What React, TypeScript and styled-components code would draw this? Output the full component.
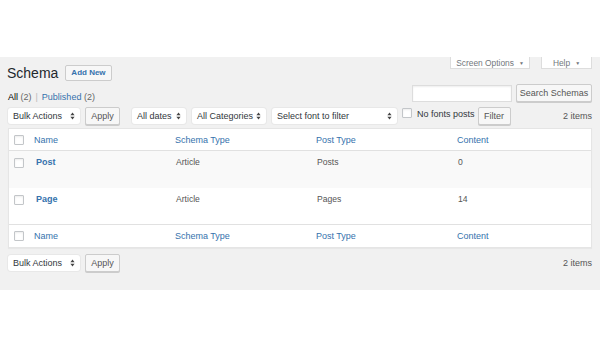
import React from "react";
import styled, { createGlobalStyle } from "styled-components";

const Global = createGlobalStyle`
  html, body { margin: 0; padding: 0; background: #fff; }
  body { font-family: "Liberation Sans", Arial, sans-serif; color: #444; }
  * { box-sizing: border-box; }
`;

const Page = styled.div`
  padding-top: 57px;
`;

const Wrap = styled.div`
  background: #f1f1f1;
  height: 233px;
  padding: 0 8px;
`;

const TopRow = styled.div`
  display: flex;
  justify-content: space-between;
  align-items: flex-start;
`;

const HeadingGroup = styled.div`
  display: flex;
  align-items: center;
  gap: 7px;
  padding-top: 8px;
  height: 24px;
`;

const Title = styled.h1`
  margin: 0 0 0 -1px;
  font-size: 14px;
  font-weight: 400;
  line-height: 16px;
  color: #23282d;
`;

const AddNew = styled.button`
  height: 16px;
  padding: 0 5px;
  font-family: inherit;
  font-size: 8px;
  font-weight: 700;
  color: #3572ad;
  background: #f7f7f7;
  border: 1px solid #ccc;
  border-radius: 2px;
  line-height: 14px;
`;

const Tabs = styled.div`
  display: flex;
  gap: 11px;
`;

const Tab = styled.div<{ $w: number }>`
  width: ${(p) => p.$w}px;
  height: 12px;
  background: #fff;
  border: 1px solid #ddd;
  border-top: none;
  display: flex;
  align-items: center;
  justify-content: center;
  gap: 5px;
  font-size: 8.4px;
  color: #72777c;
`;

const Caret = styled.span`
  font-size: 5px;
  color: #72777c;
`;

const Row2 = styled.div`
  display: flex;
  justify-content: space-between;
  align-items: flex-end;
  margin-top: 3px;
`;

const SubSub = styled.div`
  font-size: 9px;
  line-height: 11px;
  color: #666;
  margin-bottom: -1px;
  b { color: #000; font-weight: 400; }
  a { color: #3572ad; text-decoration: none; }
`;

const Sep = styled.span`
  color: #bbb;
  margin: 0 4px;
`;

const SearchBox = styled.div`
  display: flex;
  align-items: center;
  gap: 4px;
`;

const Input = styled.div`
  width: 100px;
  height: 17px;
  background: #fff;
  border: 1px solid #ddd;
  box-shadow: inset 0 1px 2px rgba(0, 0, 0, 0.07);
`;

const Btn = styled.button<{ $w: number }>`
  width: ${(p) => p.$w}px;
  height: 18px;
  padding: 0;
  font-family: inherit;
  font-size: 9px;
  color: #555;
  background: #f7f7f7;
  border: 1px solid #ccc;
  border-radius: 2px;
  box-shadow: 0 1px 0 #ccc;
  line-height: 16px;
`;

const Toolbar = styled.div<{ $top: number }>`
  display: flex;
  align-items: center;
  margin-top: ${(p) => p.$top}px;
  height: 18px;
`;

const Select = styled.div<{ $w: number; $ml?: number }>`
  width: ${(p) => p.$w}px;
  margin-left: ${(p) => p.$ml ?? 0}px;
  height: 16px;
  background: #fff;
  border-radius: 3px;
  box-shadow: 0 0 0 1px #e8e8e8;
  display: flex;
  align-items: center;
  justify-content: space-between;
  padding: 0 5px;
  font-size: 9px;
  color: #32373c;
  white-space: nowrap;
`;

const Arrows = () => (
  <svg width="5" height="8" viewBox="0 0 5 8">
    <path d="M2.5 0.5 L4.6 3.2 L0.4 3.2 Z" fill="#444" />
    <path d="M2.5 7.5 L4.6 4.8 L0.4 4.8 Z" fill="#444" />
  </svg>
);

const Gap = styled.div<{ $w: number }>`
  width: ${(p) => p.$w}px;
  flex: none;
`;

const Check = styled.span`
  display: inline-block;
  width: 10px;
  height: 10px;
  background: #fff;
  border: 1px solid #c3c6c9;
  border-radius: 1px;
  box-shadow: inset 0 1px 2px rgba(0, 0, 0, 0.08);
  flex: none;
`;

const ToolCheck = styled(Check)`
  align-self: flex-start;
  margin-top: 1px;
`;

const Label = styled.span`
  font-size: 9px;
  color: #32373c;
  margin-left: 5px;
  margin-right: 3px;
  margin-top: -4px;
`;

const Count = styled.span`
  margin-left: auto;
  font-size: 9px;
  color: #555;
`;

const Table = styled.div`
  margin-top: 3px;
  background: #fff;
  border: 1px solid #e5e5e5;
  box-shadow: 0 1px 1px rgba(0, 0, 0, 0.04);
`;

const Row = styled.div<{ $h: number; $alt?: boolean; $head?: boolean; $foot?: boolean }>`
  display: grid;
  grid-template-columns: 25px 141px 141px 141px 1fr;
  height: ${(p) => p.$h}px;
  background: ${(p) => (p.$alt ? "#f9f9f9" : "#fff")};
  border-bottom: ${(p) => (p.$head ? "1px solid #e1e1e1" : "none")};
  border-top: ${(p) => (p.$foot ? "1px solid #e1e1e1" : "none")};
  align-items: ${(p) => (p.$head || p.$foot ? "center" : "start")};
  padding-top: ${(p) => (p.$head || p.$foot ? 0 : 7)}px;
`;

const CheckCell = styled.div`
  display: flex;
  padding-left: 5px;
`;

const HeadCell = styled.div`
  font-size: 9px;
  color: #3572ad;
`;

const TitleCell = styled.div`
  font-size: 9px;
  font-weight: 700;
  color: #3572ad;
  padding-left: 2px;
  margin-top: -1px;
`;

const Cell = styled.div`
  font-size: 8.6px;
  color: #555;
  padding-left: 1px;
  margin-top: -1px;
`;

const columns = ["Name", "Schema Type", "Post Type", "Content"];
const rows = [
  { name: "Post", type: "Article", post: "Posts", content: "0" },
  { name: "Page", type: "Article", post: "Pages", content: "14" },
];

const HeaderRow = ({ foot }: { foot?: boolean }) => (
  <Row $h={foot ? 23 : 22} $head={!foot} $foot={foot}>
    <CheckCell>
      <Check />
    </CheckCell>
    {columns.map((c) => (
      <HeadCell key={c}>{c}</HeadCell>
    ))}
  </Row>
);

export default function App() {
  return (
    <Page>
      <Global />
      <Wrap>
        <TopRow>
          <HeadingGroup>
            <Title>Schema</Title>
            <AddNew>Add New</AddNew>
          </HeadingGroup>
          <Tabs>
            <Tab $w={80}>
              Screen Options <Caret>▼</Caret>
            </Tab>
            <Tab $w={51}>
              Help <Caret>▼</Caret>
            </Tab>
          </Tabs>
        </TopRow>
        <Row2>
          <SubSub>
            <b>All</b> (2)<Sep>|</Sep>
            <a>Published</a> (2)
          </SubSub>
          <SearchBox>
            <Input />
            <Btn $w={76}>Search Schemas</Btn>
          </SearchBox>
        </Row2>
        <Toolbar $top={5}>
          <Select $w={72}>
            Bulk Actions <Arrows />
          </Select>
          <Gap $w={5} />
          <Btn $w={35}>Apply</Btn>
          <Select $w={54} $ml={12}>
            All dates <Arrows />
          </Select>
          <Select $w={74} $ml={6}>
            All Categories <Arrows />
          </Select>
          <Select $w={125} $ml={6}>
            Select font to filter <Arrows />
          </Select>
          <Gap $w={5} />
          <ToolCheck />
          <Label>No fonts posts</Label>
          <Btn $w={33}>Filter</Btn>
          <Count>2 items</Count>
        </Toolbar>
        <Table>
          <HeaderRow />
          {rows.map((r, i) => (
            <Row key={r.name} $h={i === 0 ? 37 : 36} $alt={i === 0}>
              <CheckCell>
                <Check />
              </CheckCell>
              <TitleCell>{r.name}</TitleCell>
              <Cell>{r.type}</Cell>
              <Cell>{r.post}</Cell>
              <Cell>{r.content}</Cell>
            </Row>
          ))}
          <HeaderRow foot />
        </Table>
        <Toolbar $top={6}>
          <Select $w={72}>
            Bulk Actions <Arrows />
          </Select>
          <Gap $w={5} />
          <Btn $w={35}>Apply</Btn>
          <Count>2 items</Count>
        </Toolbar>
      </Wrap>
    </Page>
  );
}
